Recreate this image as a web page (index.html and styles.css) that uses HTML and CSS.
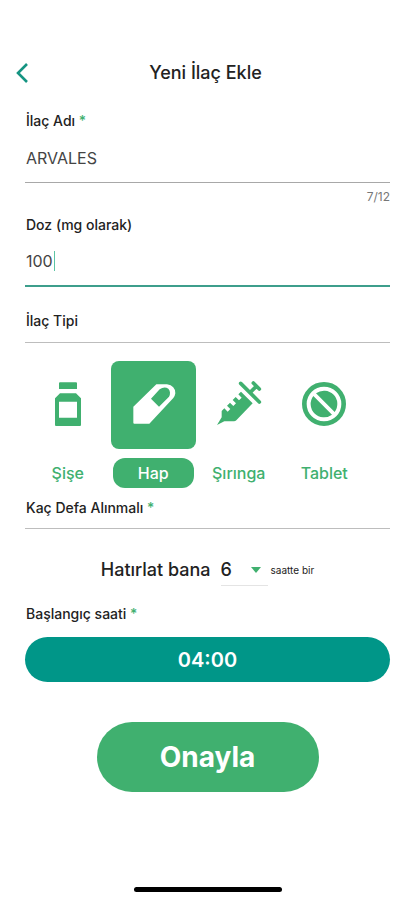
FILE: index.html
```html
<!DOCTYPE html>
<html lang="tr">
<head>
<meta charset="utf-8">
<meta name="viewport" content="width=device-width, initial-scale=1">
<title>Yeni İlaç Ekle</title>
<link rel="stylesheet" href="styles.css">
</head>
<body>
<header class="topbar">
  <button class="back" type="button" aria-label="Geri">
    <svg width="12" height="20" viewBox="0 0 12 20"><path d="M11 1 2 10l9 9" fill="none" stroke="currentColor" stroke-width="2.6"/></svg>
  </button>
  <h1 class="title">Yeni İlaç Ekle</h1>
</header>
<form class="form">
  <div class="field">
    <label class="label" for="name">İlaç Adı <span class="required">*</span></label>
    <div class="entry"><input class="input" id="name" type="text" maxlength="12" value="ARVALES"></div>
    <span class="counter">7/12</span>
  </div>
  <div class="field">
    <label class="label" for="dose">Doz (mg olarak)</label>
    <div class="entry entry-active"><input class="input" id="dose" type="text" inputmode="numeric" value="100"><span class="caret"></span></div>
  </div>
  <fieldset class="group">
    <legend class="label section section-type">İlaç Tipi</legend>
    <div class="types">
      <label class="type"><input class="radio" type="radio" name="type">
        <span class="tile"><svg width="44" height="44" viewBox="0 0 132 132"><path fill="currentColor" fill-rule="evenodd" d="M42 1h48q3 0 3 3v17H39V4q0-3 3-3zM42 34h48l15 15v80q0 3-3 3H30q-3 0-3-3V49zM39 59v48h54V59z"/></svg></span>
        <span class="type-name">Şişe</span></label>
      <label class="type"><input class="radio" type="radio" name="type" checked>
        <span class="tile"><svg class="icon" width="44" height="44" viewBox="0 0 132 132"><path fill="currentColor" fill-rule="evenodd" d="M76 7h32q25 4 25 27-1 8-6 14L55 125H10q-3 0-3-3V74zM60 50l24 24 30-30q7-14-2-24-12-8-26 2z"/></svg></span>
        <span class="type-name">Hap</span></label>
      <label class="type"><input class="radio" type="radio" name="type">
        <span class="tile"><svg class="icon" width="44" height="44" viewBox="0 0 132 132"><g transform="translate(0 -2)"><g fill="none" stroke="currentColor" stroke-width="11" stroke-linecap="round"><path d="M71 6l56 56M99 34l19-19M109 5l18 18"/></g><path fill="currentColor" d="M0 131l14-23V89l8-8 10 10 8-8-10-10 9-9 10 10 8-8-10-10 9-9 10 10 8-8-10-10 8-8 35 35-49 51q-3 3-7 3H22z"/></g></svg></span>
        <span class="type-name">Şırınga</span></label>
      <label class="type"><input class="radio" type="radio" name="type">
        <span class="tile"><svg width="44" height="44" viewBox="0 0 132 132"><circle cx="66" cy="66" r="59" fill="none" stroke="currentColor" stroke-width="14"/><path fill="currentColor" d="M42 34l56 56A40 40 0 0 0 42 34zM34 42l56 56A40 40 0 0 1 34 42z"/></svg></span>
        <span class="type-name">Tablet</span></label>
    </div>
  </fieldset>
  <fieldset class="group">
    <legend class="label section section-times">Kaç Defa Alınmalı <span class="required">*</span></legend>
    <div class="reminder">
      <label class="reminder-text" for="hours">Hatırlat bana</label>
      <span class="picker">
        <select class="select" id="hours"><option>6</option><option>8</option><option>12</option><option>24</option></select>
        <svg class="arrow" width="10" height="6" viewBox="0 0 10 6"><path d="M0 0h10L5 6z" fill="currentColor"/></svg>
      </span>
      <span class="unit">saatte bir</span>
    </div>
  </fieldset>
  <label class="label" for="start">Başlangıç saati <span class="required">*</span></label>
  <button class="time" id="start" type="button">04:00</button>
  <button class="submit" type="submit">Onayla</button>
</form>
<div class="home-bar"></div>
</body>
</html>
```
FILE: styles.css
```css
* { box-sizing: border-box; }

body {
  --green: #40b06f;
  --teal: #009688;
  display: flex;
  flex-direction: column;
  min-height: 100vh;
  margin: 0;
  padding-top: 48px;
  background: #fff;
  color: #222;
  font-family: Inter, "Liberation Sans", sans-serif;
}

button, input, select { font: inherit; color: inherit; }
button { border: 0; padding: 0; cursor: pointer; }
svg { display: block; }

.topbar {
  display: grid;
  grid-template-columns: 48px 1fr 48px;
  align-items: center;
  height: 50px;
}
.back {
  display: flex;
  padding-left: 16px;
  background: none;
  color: #159482;
}
.title {
  margin: 0;
  padding-right: 4px;
  font-size: 18px;
  line-height: 24px;
  font-weight: 500;
  text-align: center;
}

.form {
  display: flex;
  flex-direction: column;
  padding: 11px 25px 0;
}
.field { display: flex; flex-direction: column; }
.label {
  display: block;
  padding: 0 1px;
  font-size: 14px;
  line-height: 24px;
  font-weight: 500;
}
.required { color: var(--green); }
.entry {
  display: flex;
  align-items: center;
  height: 50px;
  border-bottom: 1px solid #a8a8a8;
}
.entry-active { border-bottom: 2px solid #3d9e8c; }
.input {
  field-sizing: content;
  border: 0;
  outline: 0;
  padding: 0 1px;
  background: none;
  color: #444;
  font-size: 16px;
  line-height: 24px;
}
.caret { width: 1px; height: 20px; background: #5cc5a5; }
.counter {
  align-self: flex-end;
  padding: 4px 0 6px;
  color: #777;
  font-size: 12px;
  line-height: 20px;
}

.group { min-width: 0; margin: 0; padding: 0; border: 0; }
.section { width: 100%; border-bottom: 1px solid #bdbdbd; }
.section-type { padding: 22px 1px 9px; }
.section-times { padding: 8px 1px; }

.types {
  display: grid;
  grid-template-columns: repeat(4, 1fr);
  margin-right: 23px;
  padding-top: 18px;
}
.type {
  display: flex;
  flex-direction: column;
  align-items: center;
  gap: 9px;
  position: relative;
  color: var(--green);
  cursor: pointer;
}
.radio { position: absolute; opacity: 0; margin: 0; }
.tile {
  display: flex;
  align-items: center;
  justify-content: center;
  width: 100%;
  height: 88px;
  padding-bottom: 2px;
  border-radius: 8px;
}
.icon { overflow: visible; }
.type-name {
  width: 81px;
  border-radius: 12px;
  font-size: 16px;
  line-height: 30px;
  font-weight: 500;
  text-align: center;
}
.radio:checked ~ .tile, .radio:checked ~ .type-name {
  background: var(--green);
  color: #fff;
}

.reminder {
  display: flex;
  align-items: center;
  justify-content: center;
  padding: 25px 0 16px;
}
.reminder-text { font-size: 18px; line-height: 24px; font-weight: 500; }
.picker {
  display: flex;
  align-items: center;
  position: relative;
  width: 47px;
  height: 32px;
  margin: 0 3px 0 10px;
  border-bottom: 1px solid #e4e4e4;
}
.select {
  width: 100%;
  border: 0;
  outline: 0;
  padding: 0;
  appearance: none;
  background: none;
  font-size: 18px;
  line-height: 24px;
  font-weight: 500;
}
.arrow { position: absolute; right: 7px; color: var(--green); pointer-events: none; }
.unit { font-size: 10px; line-height: 16px; }

.time {
  height: 45px;
  margin-top: 11px;
  border-radius: 23px;
  background: var(--teal);
  color: #fff;
  font-size: 20px;
  font-weight: 600;
}
.submit {
  align-self: center;
  width: 222px;
  height: 70px;
  margin-top: 40px;
  border-radius: 35px;
  background: var(--green);
  color: #fff;
  font-size: 28px;
  font-weight: 700;
}

.home-bar {
  width: 148px;
  height: 5px;
  margin: auto auto 8px;
  border-radius: 3px;
  background: #000;
}
```
